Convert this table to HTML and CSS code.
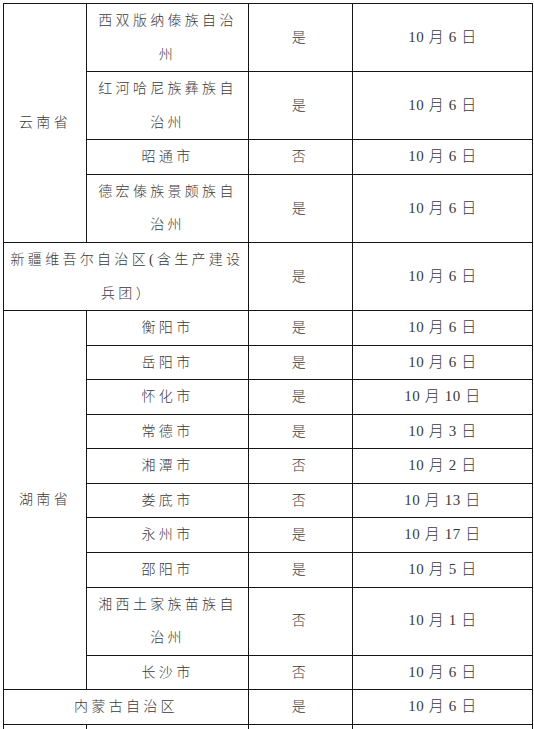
FILE: index.html
```html
<!DOCTYPE html>
<html lang="zh-CN">
<head>
<meta charset="utf-8">
<title>表格</title>
<link rel="stylesheet" href="styles.css">
</head>
<body>
<table class="sheet">
  <colgroup>
    <col class="c1"><col class="c2"><col class="c3"><col class="c4">
  </colgroup>
  <tbody>
    <tr>
      <td class="zh" rowspan="4">云南省</td>
      <td class="zh">西双版纳傣族自治州</td>
      <td class="zh">是</td>
      <td class="num">10 月 6 日</td>
    </tr>
    <tr>
      <td class="zh">红河哈尼族彝族自治州</td>
      <td class="zh">是</td>
      <td class="num">10 月 6 日</td>
    </tr>
    <tr>
      <td class="zh">昭通市</td>
      <td class="zh">否</td>
      <td class="num">10 月 6 日</td>
    </tr>
    <tr>
      <td class="zh">德宏傣族景颇族自治州</td>
      <td class="zh">是</td>
      <td class="num">10 月 6 日</td>
    </tr>
    <tr>
      <td class="zh wide" colspan="2">新疆维吾尔自治区(含生产建设兵团）</td>
      <td class="zh">是</td>
      <td class="num">10 月 6 日</td>
    </tr>
    <tr>
      <td class="zh" rowspan="10">湖南省</td>
      <td class="zh">衡阳市</td>
      <td class="zh">是</td>
      <td class="num">10 月 6 日</td>
    </tr>
    <tr>
      <td class="zh">岳阳市</td>
      <td class="zh">是</td>
      <td class="num">10 月 6 日</td>
    </tr>
    <tr>
      <td class="zh">怀化市</td>
      <td class="zh">是</td>
      <td class="num">10 月 10 日</td>
    </tr>
    <tr>
      <td class="zh">常德市</td>
      <td class="zh">是</td>
      <td class="num">10 月 3 日</td>
    </tr>
    <tr>
      <td class="zh">湘潭市</td>
      <td class="zh">否</td>
      <td class="num">10 月 2 日</td>
    </tr>
    <tr>
      <td class="zh">娄底市</td>
      <td class="zh">否</td>
      <td class="num">10 月 13 日</td>
    </tr>
    <tr>
      <td class="zh">永州市</td>
      <td class="zh">是</td>
      <td class="num">10 月 17 日</td>
    </tr>
    <tr>
      <td class="zh">邵阳市</td>
      <td class="zh">是</td>
      <td class="num">10 月 5 日</td>
    </tr>
    <tr>
      <td class="zh">湘西土家族苗族自治州</td>
      <td class="zh">否</td>
      <td class="num">10 月 1 日</td>
    </tr>
    <tr>
      <td class="zh">长沙市</td>
      <td class="zh">否</td>
      <td class="num">10 月 6 日</td>
    </tr>
    <tr>
      <td class="zh" colspan="2">内蒙古自治区</td>
      <td class="zh">是</td>
      <td class="num">10 月 6 日</td>
    </tr>
    <tr>
      <td class="zh">&nbsp;</td>
      <td class="zh">&nbsp;</td>
      <td class="zh">&nbsp;</td>
      <td class="num">&nbsp;</td>
    </tr>
  </tbody>
</table>
</body>
</html>
```

FILE: styles.css
```css
html, body {
  margin: 0;
  padding: 0;
  background: #ffffff;
}

body {
  padding: 3px 0 0 3px;
}

.sheet {
  border-collapse: collapse;
  table-layout: fixed;
  width: 529px;
}

.c1 { width: 83px; }
.c2 { width: 162px; }
.c3 { width: 104px; }
.c4 { width: 180px; }

.sheet td {
  border: 1px solid #151515;
  padding: 0 8px;
  text-align: center;
  vertical-align: middle;
  line-height: 33.57px;
  color: #3a3a3a;
  overflow: hidden;
}

.zh {
  font-family: "Liberation Serif", "Noto Sans CJK SC", serif;
  font-size: 14px;
  font-weight: 300;
  letter-spacing: 3.3px;
}

.sheet td.wide {
  padding: 0 2px 0 4px;
}

.num {
  font-family: "Liberation Serif", "Noto Sans CJK SC", serif;
  font-size: 15px;
  font-weight: 300;
  letter-spacing: 0.6px;
  color: #2a2a2a;
}
```
